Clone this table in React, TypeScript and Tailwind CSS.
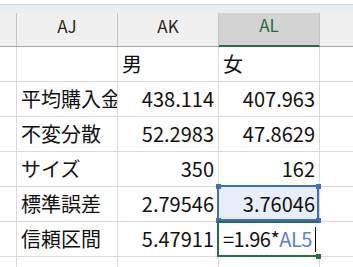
import React from "react";

const font = { fontFamily: '"Noto Sans CJK JP", "Noto Sans", sans-serif' };

type Cell = { text?: React.ReactNode; align?: "left" | "right"; cls?: string };

const rows: Cell[][] = [
  [{}, {}, { text: "男" }, { text: "女" }],
  [{}, { text: "平均購入金額" }, { text: "438.114", align: "right" }, { text: "407.963", align: "right" }],
  [{}, { text: "不変分散" }, { text: "52.2983", align: "right" }, { text: "47.8629", align: "right" }],
  [{}, { text: "サイズ" }, { text: "350", align: "right" }, { text: "162", align: "right" }],
  [{}, { text: "標準誤差" }, { text: "2.79546", align: "right" }, { text: "3.76046", align: "right", cls: "bg-[#e8eef9]" }],
  [
    {},
    { text: "信頼区間" },
    { text: "5.47911", align: "right" },
    {
      text: (
        <span className="flex items-center tracking-[-0.5px]">
          =1.96*<span className="text-[#5581d6]">AL5</span>
          <span className="ml-[3px] inline-block w-px h-[25px] bg-black" />
        </span>
      ),
      cls: "!border-r-transparent overflow-visible z-10",
    },
  ],
  [{}, {}, {}, {}],
];

const widths = ["w-[17px]", "w-[101px]", "w-[101px]", "w-[101px]"];

function Square({ x, y, color }: { x: number; y: number; color: string }) {
  return (
    <div
      className="absolute w-[5px] h-[5px]"
      style={{ left: x, top: y, background: color }}
    />
  );
}

export default function App() {
  const heads = ["", "AJ", "AK", "AL"];
  return (
    <div className="relative w-[353px] h-[267px] overflow-hidden bg-white text-[#111]" style={font}>
      {/* column header */}
      <div className="h-[4px] bg-white border-b border-[#d2d2d2] box-content" />
      <div className="h-[8px] bg-[#e6eff1]" />
      <div className="flex h-[34px] border-b border-[#a3a3a3] bg-[#f0f0f0] text-[17px]">
        {heads.map((h, i) => (
          <div
            key={i}
            className={`${widths[i]} shrink-0 flex items-center justify-center pb-2 border-r border-[#c4c4c4] ${
              h === "AL" ? "bg-[#d3d3d3] text-[#1f6e43] border-b-2 border-b-[#217346] -mb-px" : "text-[#262626]"
            }`}
          >
            {h}
          </div>
        ))}
        <div className="flex-1" />
      </div>

      {/* cells */}
      {rows.map((r, ri) => (
        <div key={ri} className="flex h-[35px] border-b border-[#dadada] text-[20px]">
          {r.map((c, ci) => (
            <div
              key={ci}
              className={`${widths[ci]} shrink-0 relative flex items-center whitespace-nowrap overflow-hidden border-r border-[#dadada] px-[4px] ${
                c.align === "right" ? "justify-end" : "justify-start"
              } ${c.cls ?? ""}`}
            >
              {c.text}
            </div>
          ))}
          <div className="flex-1" />
        </div>
      ))}

      {/* selection of AL5 */}
      <div className="absolute left-[217px] top-[185px] w-[102px] h-[36px] border-2 border-[#3b6fc6]" />
      <Square x={216} y={184} color="#3b6fc6" />
      <Square x={316} y={184} color="#3b6fc6" />
      <Square x={216} y={218} color="#3b6fc6" />
      <Square x={316} y={218} color="#3b6fc6" />

      {/* active cell AL6 */}
      <div className="absolute left-[217px] top-[221px] w-[102px] h-[36px] border-2 border-r-0 border-[#217346]" />
      <Square x={316} y={254} color="#217346" />
    </div>
  );
}
